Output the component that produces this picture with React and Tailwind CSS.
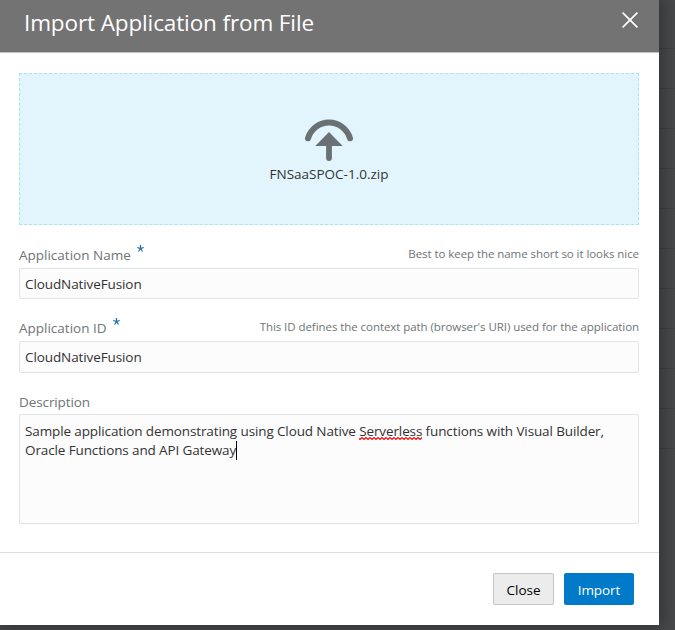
const inputBox = 'rounded-[2px] border border-[#dfe4e7] bg-[#fcfcfc] px-[5px] text-[13.5px] text-[#333]';

const rowLines = [48, 88, 128, 168, 208, 248, 288, 328, 368, 408, 448];

function UploadIcon() {
  return (
    <svg className="block" width="50" height="44" viewBox="0 0 50 44" fill="none">
      <path d="M4 20.3A22 22.4 0 0 1 46 20.3" stroke="#697174" strokeWidth="6" strokeLinecap="round" />
      <path d="M25 14L38.7 28H11.3z" fill="#697174" />
      <path d="M25 26v14" stroke="#697174" strokeWidth="5.8" strokeLinecap="round" />
    </svg>
  );
}

function RequiredMark() {
  return (
    <svg className="ml-[6px]" width="7" height="7" viewBox="0 0 7 7" stroke="#1b6cab" strokeWidth="1.2">
      <path d="M3.5 0v3.5M.3 2.5l3.2 1 3.2-1M3.5 3.5l-2 3M3.5 3.5l2 3" fill="none" />
    </svg>
  );
}

function Misspelled({ children }) {
  return (
    <span className="relative">
      {children}
      <svg className="absolute bottom-0 left-0 w-full" height="3">
        <defs>
          <pattern id="squiggle" width="4" height="3" patternUnits="userSpaceOnUse">
            <path d="M-1 0l2 2 2-2 2 2" transform="translate(0 .5)" fill="none" stroke="#f00" strokeWidth="1.1" />
          </pattern>
        </defs>
        <rect width="100%" height="3" fill="url(#squiggle)" />
      </svg>
    </span>
  );
}

function FieldHeader({ label, hint }) {
  return (
    <div className="flex h-5 items-center justify-between whitespace-nowrap">
      <div className="flex text-[13.5px] leading-5 text-[#6f7477]">
        <span>{label}</span>
        <RequiredMark />
      </div>
      <span className="-mt-[2px] text-[11.5px] leading-5 tracking-[-0.06px] text-[#6f7477]">{hint}</span>
    </div>
  );
}

export default function App() {
  return (
    <div className="relative h-[630px] w-[675px] overflow-hidden bg-[#474849] font-['Open_Sans','Noto_Sans',sans-serif]">
      {rowLines.map((y) => (
        <div key={y} className="absolute right-0 h-px w-4 bg-[#3f4041]" style={{ top: y }} />
      ))}
      <div className="relative flex h-[625px] w-[659px] flex-col bg-white shadow-[0_0_16px_2px_rgba(0,0,0,0.35)]">
        <header className="flex h-[53px] shrink-0 items-start justify-between border-b border-[#c4c4c4] bg-[#737373] pr-[21px] pl-6">
          <h1 className="mt-[7px] text-[22.5px] leading-8 tracking-[-0.12px] whitespace-nowrap text-white">Import Application from File</h1>
          <svg className="mt-3" width="16" height="16" viewBox="0 0 16 16" fill="none" stroke="#fff" strokeWidth="1.7">
            <path d="M.6.6l14.8 14.8M15.4.6L.6 15.4" />
          </svg>
        </header>

        <main className="flex h-[499px] flex-col px-5 pt-5 pl-[19px]">
          <section className="flex h-[152px] shrink-0 flex-col items-center border border-dashed border-[#ace0f2] bg-[#e2f5fc] pt-[44px]">
            <UploadIcon />
            <span className="mt-[2px] text-[13.5px] leading-5 text-[#333]">FNSaaSPOC-1.0.zip</span>
          </section>

          <div className="mt-5">
            <FieldHeader label="Application Name" hint="Best to keep the name short so it looks nice" />
            <div className={`mt-[3px] flex h-[31px] items-center pt-[2px] tracking-[-0.1px] ${inputBox}`}>CloudNativeFusion</div>
          </div>

          <div className="mt-[19px]">
            <FieldHeader label="Application ID" hint="This ID defines the context path (browser's URI) used for the application" />
            <div className={`mt-[3px] flex h-8 items-center tracking-[-0.1px] ${inputBox}`}>CloudNativeFusion</div>
          </div>

          <div className="mt-[19px]">
            <div className="h-5 text-[13.5px] leading-5 tracking-[-0.1px] text-[#6f7477]">Description</div>
            <div className={`mt-[2px] h-[110px] pt-[7px] leading-[19px] tracking-[-0.12px] whitespace-nowrap ${inputBox}`}>
              <p>Sample application demonstrating using Cloud Native <Misspelled>Serverless</Misspelled> functions with Visual Builder,</p>
              <p className="flex">Oracle Functions and API Gateway<span className="h-[19px] w-px bg-black" /></p>
            </div>
          </div>
        </main>

        <footer className="flex flex-1 justify-end gap-[10px] border-t border-[#d5dfe3] pt-5 pr-[25px] text-[13.5px]">
          <button className="h-8 w-[61px] rounded-[2px] border border-[#c4c4c4] bg-[#ececec] pt-[2px] text-black">Close</button>
          <button className="h-8 w-[70px] rounded-[2px] bg-[#007ac9] pt-[2px] tracking-[-0.1px] text-white">Import</button>
        </footer>
      </div>
    </div>
  );
}
